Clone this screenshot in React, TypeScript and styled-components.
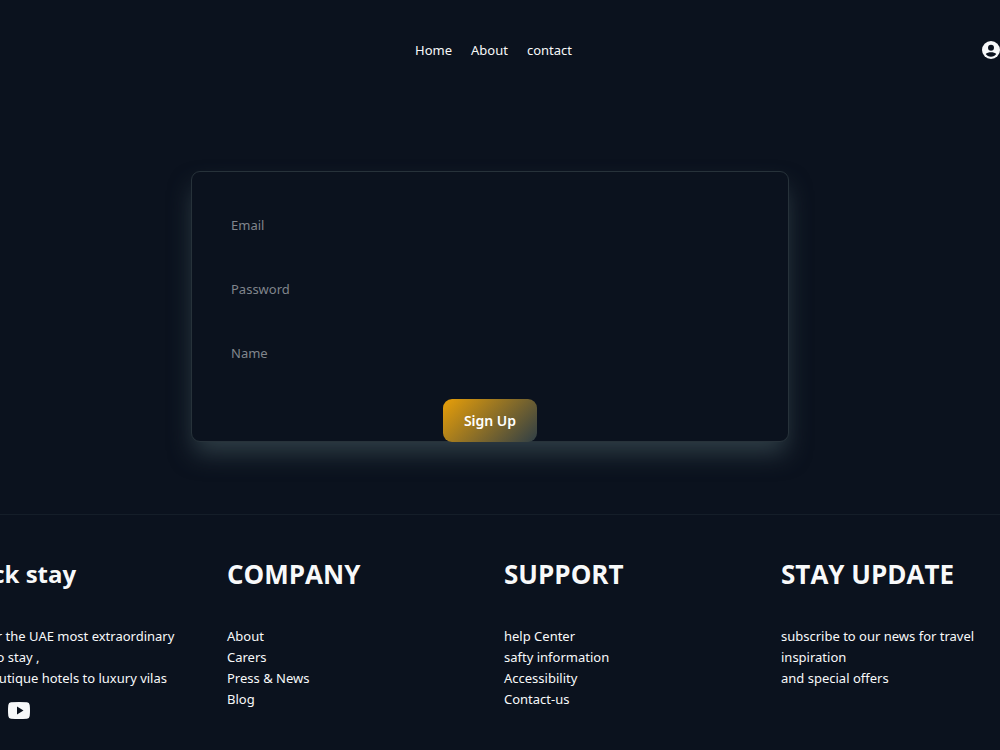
import React from "react";
import styled, { createGlobalStyle } from "styled-components";

const GlobalStyle = createGlobalStyle`
  *, *::before, *::after { box-sizing: border-box; }
  body {
    margin: 0;
    background: #0b121e;
    color: #f8f9fa;
    font-family: "Segoe UI", "Noto Sans", "Open Sans", sans-serif;
    font-size: 13px;
    line-height: 21px;
    overflow-x: hidden;
  }
  a { color: inherit; text-decoration: none; }
`;

const Header = styled.header`
  display: grid;
  grid-template-columns: 1fr auto 1fr;
  align-items: center;
  height: 100px;
`;

const Nav = styled.nav`
  grid-column: 2;
  display: flex;
  gap: 19px;
  padding-right: 13px;
`;

const AccountLink = styled.a`
  justify-self: end;
  display: flex;
`;

const Main = styled.main`
  display: flex;
  justify-content: center;
  padding: 71px 20px 72px 0;
`;

const SignUpForm = styled.form`
  display: flex;
  flex-direction: column;
  align-items: center;
  width: 100%;
  max-width: 598px;
  padding: 32px 32px 0;
  border: 1px solid #27323a;
  border-radius: 9px;
  background: #0b121e;
  box-shadow: 0 14px 24px -3px #2f3e46;
`;

const Field = styled.input`
  width: 100%;
  height: 42px;
  margin-bottom: 22px;
  padding: 0 7px;
  border: 0;
  outline: none;
  background: transparent;
  color: #f8f9fa;
  font: inherit;

  &::placeholder {
    color: #80858c;
    opacity: 1;
  }
`;

const SubmitButton = styled.button`
  width: 94px;
  height: 43px;
  margin: 3px 0 -1px;
  padding: 0;
  border: 0;
  border-radius: 9px;
  background: linear-gradient(135deg, #e89f08, #2f3e46);
  color: #ffffff;
  font: inherit;
  font-size: 14px;
  font-weight: 600;
  cursor: pointer;
`;

const Footer = styled.footer`
  display: grid;
  grid-template-columns: repeat(4, 277px);
  justify-content: center;
  padding: 43px 0 28px 8px;
  border-top: 1px solid #151e29;
  overflow: hidden;
`;

const Column = styled.section`
  padding-right: 44px;
`;

const Heading = styled.h2<{ $brand?: boolean }>`
  margin: 0 0 36px;
  font-family: "Segoe UI", "Open Sans", "Noto Sans", sans-serif;
  font-size: ${({ $brand }) => ($brand ? "24px" : "26px")};
  font-weight: 700;
  line-height: 32px;
  white-space: nowrap;
`;

const Line = styled.p`
  margin: 0;
  white-space: nowrap;
`;

const LinkList = styled.ul`
  margin: 0;
  padding: 0;
  list-style: none;
`;

const Socials = styled.div`
  display: flex;
  gap: 12px;
  margin-top: 13px;

  a { display: flex; }
`;

const footerLinks = [
  { title: "COMPANY", links: ["About", "Carers", "Press & News", "Blog"] },
  {
    title: "SUPPORT",
    links: ["help Center", "safty information", "Accessibility", "Contact-us"],
  },
];

const AccountIcon = () => (
  <svg width="18" height="18" viewBox="0 0 18 18" aria-hidden="true">
    <circle cx="9" cy="9" r="9" fill="#f8f9fa" />
    <circle cx="9" cy="6.8" r="3" fill="#0b121e" />
    <path
      d="M3.7 13.1C4.7 11.8 6.9 11.2 9 11.2s4.3.6 5.3 1.9C13.2 14.7 11.2 15.7 9 15.7s-4.2-1-5.3-2.6z"
      fill="#0b121e"
    />
  </svg>
);

const YoutubeIcon = () => (
  <svg width="22" height="17" viewBox="0 0 22 17" aria-hidden="true">
    <path
      fill="#f8f9fa"
      fillRule="evenodd"
      d="M3 .3Q11-.3 19 .3Q21.4.5 21.7 3Q22.3 8.5 21.7 14Q21.4 16.5 19 16.7Q11 17.3 3 16.7Q.6 16.5.3 14Q-.3 8.5.3 3Q.6.5 3 .3zM9 4.6v7.8l6.500-3.900z"
    />
  </svg>
);

const FacebookIcon = () => (
  <svg width="17" height="17" viewBox="0 0 24 24" aria-hidden="true">
    <path fill="#f8f9fa" d="M14 9h4l-1 4h-3v9h-4v-9H7V9h3V6q0-4 4-4h4v4h-3q-1 0-1 1z" />
  </svg>
);

const InstagramIcon = () => (
  <svg width="17" height="17" viewBox="0 0 24 24" aria-hidden="true">
    <g fill="none" stroke="#f8f9fa" strokeWidth="2">
      <rect x="2" y="2" width="20" height="20" rx="5" />
      <circle cx="12" cy="12" r="4" />
    </g>
  </svg>
);

export default function App() {
  return (
    <>
      <GlobalStyle />
      <Header>
        <Nav aria-label="Main">
          <a href="#home">Home</a>
          <a href="#about">About</a>
          <a href="#contact">contact</a>
        </Nav>
        <AccountLink href="#account" aria-label="Account">
          <AccountIcon />
        </AccountLink>
      </Header>
      <Main>
        <SignUpForm onSubmit={(event) => event.preventDefault()}>
          <Field type="email" placeholder="Email" aria-label="Email" />
          <Field type="password" placeholder="Password" aria-label="Password" />
          <Field type="text" placeholder="Name" aria-label="Name" />
          <SubmitButton type="submit">Sign Up</SubmitButton>
        </SignUpForm>
      </Main>
      <Footer>
        <Column>
          <Heading $brand>Quick stay</Heading>
          <Line>Discover the UAE most extraordinary</Line>
          <Line>places to stay ,</Line>
          <Line>from boutique hotels to luxury vilas</Line>
          <Socials>
            <a href="#facebook" aria-label="Facebook">
              <FacebookIcon />
            </a>
            <a href="#instagram" aria-label="Instagram">
              <InstagramIcon />
            </a>
            <a href="#youtube" aria-label="YouTube">
              <YoutubeIcon />
            </a>
          </Socials>
        </Column>
        {footerLinks.map(({ title, links }) => (
          <Column key={title}>
            <Heading>{title}</Heading>
            <LinkList>
              {links.map((label) => (
                <li key={label}>
                  <a href={"#" + label.toLowerCase().replace(/\W+/g, "-")}>{label}</a>
                </li>
              ))}
            </LinkList>
          </Column>
        ))}
        <Column>
          <Heading>STAY UPDATE</Heading>
          <Line>subscribe to our news for travel</Line>
          <Line>inspiration</Line>
          <Line>and special offers</Line>
        </Column>
      </Footer>
    </>
  );
}
